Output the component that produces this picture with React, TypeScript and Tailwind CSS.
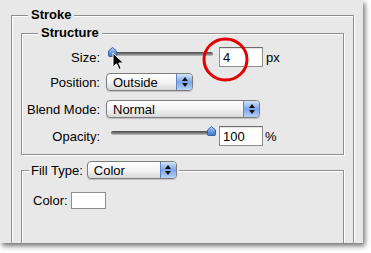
import React from "react";

const font = "font-['Liberation_Sans',Arial,sans-serif]";

function Arrows() {
  return (
    <span className="flex w-[16px] flex-col items-center justify-center gap-[2px] border-l border-[#5f86c4] bg-gradient-to-b from-[#d3e3f8] via-[#7aa6e8] to-[#b5d0f5]">
      <svg width="6" height="4" viewBox="0 0 6 4">
        <path d="M3 0L6 4H0Z" fill="#111" />
      </svg>
      <svg width="6" height="4" viewBox="0 0 6 4">
        <path d="M0 0H6L3 4Z" fill="#111" />
      </svg>
    </span>
  );
}

function PopUp({ label, width }: { label: string; width: string }) {
  return (
    <div className={`flex h-[18px] ${width} overflow-hidden rounded-[4px] border border-[#7d7d7d] bg-gradient-to-b from-white via-[#f4f4f4] to-[#d9d9d9] shadow-[0_1px_1px_rgba(0,0,0,0.18)]`}>
      <span className="flex flex-1 items-center pl-[6px] text-[13px] leading-none text-black">{label}</span>
      <Arrows />
    </div>
  );
}

function Slider({ at }: { at: "min" | "max" }) {
  return (
    <div className="relative h-[20px] w-[108px]">
      <div className="absolute left-[3px] right-[3px] top-[5px] h-[4px] rounded-full bg-gradient-to-b from-[#4a4a4a] via-[#7a7a7a] to-[#c4c4c4]" />
      <svg
        className={`absolute top-[0px] ${at === "min" ? "left-0" : "right-0"}`}
        width="9"
        height="10"
        viewBox="0 0 9 10"
      >
        <defs>
          <linearGradient id={`thumb-${at}`} x1="0" y1="0" x2="0" y2="1">
            <stop offset="0" stopColor="#bcd4f6" />
            <stop offset="0.5" stopColor="#6f9ee6" />
            <stop offset="1" stopColor="#3f74cc" />
          </linearGradient>
        </defs>
        <path
          d="M4.5 0.5L8.5 4V8.5Q8.5 9.5 7.5 9.5H1.5Q0.5 9.5 0.5 8.5V4Z"
          fill={`url(#thumb-${at})`}
          stroke="#3b5f9c"
          strokeWidth="1"
        />
      </svg>
    </div>
  );
}

function Field({ value }: { value: string }) {
  return (
    <div className="flex h-[20px] w-[44px] items-center border border-[#8d8d8d] border-t-[#6b6b6b] bg-white pl-[3px] text-[13px] leading-none text-black shadow-[inset_0_1px_1px_rgba(0,0,0,0.12)]">
      {value}
    </div>
  );
}

function Label({ children }: { children: React.ReactNode }) {
  return <span className="w-[78px] shrink-0 text-right text-[13px] leading-none text-black">{children}</span>;
}

export default function App() {
  return (
    <div className={`h-[253px] w-[371px] bg-white ${font}`}>
      <div className="relative h-[243px] w-[363px] overflow-hidden bg-[#e8e8e8] pt-[7px] shadow-[2px_3px_5px_rgba(0,0,0,0.55)]">
        <fieldset className="ml-[11px] h-[260px] w-[343px] border border-b-0 border-[#8e8e8e] shadow-[inset_1px_1px_0_#fff,1px_0_0_#fff]">
          <legend className="ml-[16px] bg-[#e8e8e8] px-[3px] text-[13px] font-bold leading-[16px] text-black">Stroke</legend>

          <fieldset className="ml-[9px] mt-[2px] w-[323px] border border-[#8e8e8e] pb-[8px] shadow-[inset_1px_1px_0_#fff,1px_1px_0_#fff]">
            <legend className="ml-[16px] bg-[#e8e8e8] px-[3px] text-[13px] font-bold leading-[16px] text-black">Structure</legend>

            <div className="mt-[6px] flex h-[20px] items-center">
              <Label>Size:</Label>
              <div className="ml-[8px]">
                <Slider at="min" />
              </div>
              <div className="ml-[3px]">
                <Field value="4" />
              </div>
              <span className="ml-[3px] text-[13px] leading-none text-black">px</span>
            </div>

            <div className="mt-[6px] flex h-[18px] items-center">
              <Label>Position:</Label>
              <div className="ml-[6px]">
                <PopUp label="Outside" width="w-[87px]" />
              </div>
            </div>

            <div className="mt-[9px] flex h-[18px] items-center">
              <Label>Blend Mode:</Label>
              <div className="ml-[6px]">
                <PopUp label="Normal" width="w-[154px]" />
              </div>
            </div>

            <div className="mt-[8px] flex h-[20px] items-center">
              <Label>Opacity:</Label>
              <div className="ml-[8px]">
                <Slider at="max" />
              </div>
              <div className="ml-[3px]">
                <Field value="100" />
              </div>
              <span className="ml-[2px] text-[13px] leading-none text-black">%</span>
            </div>
          </fieldset>

          <fieldset className="ml-[9px] mt-[6px] h-[120px] w-[323px] border border-b-0 border-[#8e8e8e] shadow-[inset_1px_1px_0_#fff,1px_0_0_#fff]">
            <legend className="ml-[7px] flex items-center gap-[4px] bg-[#e8e8e8] px-[2px] text-[13px] leading-none text-black">
              <span>Fill Type:</span>
              <PopUp label="Color" width="w-[90px]" />
            </legend>

            <div className="ml-[11px] mt-[13px] flex h-[17px] items-center gap-[3px]">
              <span className="text-[13px] leading-none text-black">Color:</span>
              <div className="h-[17px] w-[35px] border border-[#8d8d8d] bg-white" />
            </div>
          </fieldset>
        </fieldset>

        <svg className="pointer-events-none absolute left-[201px] top-[36px]" width="50" height="48" viewBox="0 0 50 48">
          <ellipse cx="24.5" cy="23.5" rx="21.5" ry="20.5" fill="none" stroke="#e30000" strokeWidth="3" />
        </svg>

        <svg className="pointer-events-none absolute left-[112px] top-[52px]" width="13" height="19" viewBox="0 0 13 19">
          <path d="M1 1V15L4.5 11.8L7 17.5L9.2 16.5L6.8 11H11.5Z" fill="#000" stroke="#fff" strokeWidth="1" strokeLinejoin="round" />
        </svg>
      </div>
    </div>
  );
}
